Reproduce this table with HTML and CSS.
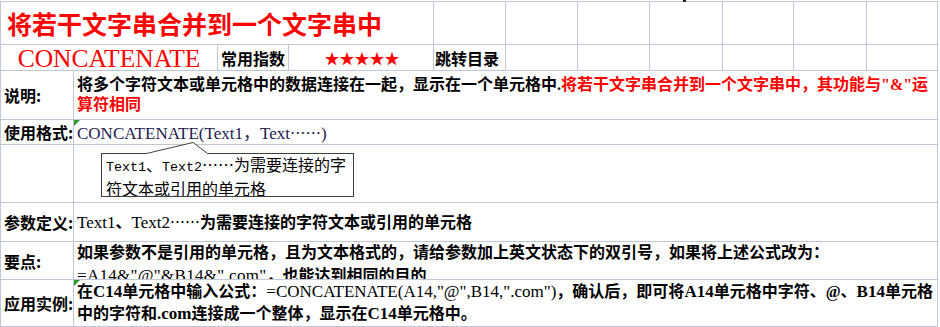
FILE: index.html
```html
<!DOCTYPE html>
<html lang="zh-CN">
<head>
<meta charset="utf-8">
<title>CONCATENATE</title>
<link rel="stylesheet" href="styles.css">
</head>
<body>
<div class="sheet">
  <div class="c title s6">将若干文字串合并到一个文字串中</div>
  <div class="c"></div><div class="c"></div><div class="c"></div><div class="c"></div><div class="c"></div><div class="c"></div><div class="c"></div>

  <div class="c fname s3">CONCATENATE</div>
  <div class="c hd">常用指数</div>
  <div class="c stars s2">★★★★★</div>
  <div class="c hd jump">跳转目录</div>
  <div class="c"></div><div class="c"></div><div class="c"></div><div class="c"></div><div class="c"></div><div class="c"></div>

  <div class="c lbl">说明:</div>
  <div class="c txt s12 mid lh20"><div><b>将多个字符文本或单元格中的数据连接在一起，显示在一个单元格中.</b><b class="red">将若干文字串合并到一个文字串中，其功能与"&amp;"运<br>算符相同</b></div></div>

  <div class="c lbl">使用格式:</div>
  <div class="c txt s12 mid flag"><span class="fmt">CONCATENATE(Text1，Text<span class="ell">……</span>)</span></div>

  <div class="c lbl"></div>
  <div class="c txt s12"></div>

  <div class="c lbl">参数定义:</div>
  <div class="c txt s12 mid"><div><span class="lat">Text1</span><b>、</b><span class="lat">Text2</span><span class="ell">……</span><b>为需要连接的字符文本或引用的单元格</b></div></div>

  <div class="c lbl">要点:</div>
  <div class="c txt s12 top lh22"><div><b>如果参数不是引用的单元格，且为文本格式的，请给参数加上英文状态下的双引号，如果将上述公式改为：</b><br><span class="lat sp">=A14&amp;"@"&amp;B14&amp;".com"</span><b>，也能达到相同的目的</b></div></div>

  <div class="c lbl">应用实例:</div>
  <div class="c txt s12 mid lh22 flag"><div><b>在<span class="lat">C14</span>单元格中输入公式：</b><span class="lat">=CONCATENATE(A14,"@",B14,".com")</span><b>，确认后，即可将<span class="lat">A14</span>单元格中字符、@、<span class="lat">B14</span>单元格<br>中的字符和<span class="lat">.com</span>连接成一个整体，显示在<span class="lat">C14</span>单元格中。</b></div></div>

  <div class="callout"><span class="mono">Text1</span>、<span class="mono">Text2</span>……为需要连接的字<br>符文本或引用的单元格</div>
  <svg class="pointer" width="75" height="18" viewBox="0 0 75 18">
    <polygon points="6.5,13.5 53,2.5 67.5,13.5 67.5,14.6 6.5,14.6" fill="#ffffff"/>
    <polyline points="6.5,13.5 53,2.5 67.5,13.5" fill="none" stroke="#404040" stroke-width="1"/>
  </svg>
  <div class="mark"></div>
</div>
</body>
</html>
```

FILE: styles.css
```css
html, body {
  margin: 0;
  padding: 0;
  background: #ffffff;
}

.sheet {
  position: relative;
  margin-top: 1px;
  width: 938px;
  box-sizing: border-box;
  display: grid;
  grid-template-columns: 73px 72px 72px 71px 74px 71px 72px 72px 72px 73px 71px 73px 71px;
  grid-template-rows: 43px 26px 49px 25px 58px 39px 38px 47px;
  border-top: 1px solid #c2c7d6;
  border-left: 1px solid #c2c7d6;
  font-family: "Liberation Serif", "Noto Sans CJK SC", serif;
  font-size: 16px;
  color: #000000;
}

.c {
  box-sizing: border-box;
  border-right: 1px solid #c2c7d6;
  border-bottom: 1px solid #c2c7d6;
  overflow: hidden;
  white-space: nowrap;
  display: flex;
  align-items: center;
  position: relative;
}

.s2 { grid-column: span 2; }
.s3 { grid-column: span 3; }
.s6 { grid-column: span 6; }
.s12 { grid-column: span 12; }

.title {
  color: #ff0000;
  font-weight: 700;
  font-size: 25px;
  line-height: 30px;
  padding-left: 6px;
  font-family: "Noto Sans CJK SC", sans-serif;
}

.fname {
  justify-content: center;
  color: #ff0000;
  font-family: "Liberation Serif", serif;
  font-size: 25.5px;
  line-height: 23px;
  padding-top: 1px;
}

.hd {
  font-family: "Noto Sans CJK SC", sans-serif;
  font-weight: 700;
  font-size: 16px;
  line-height: 20px;
  padding-left: 3px;
}

.jump {
  padding-left: 1px;
}

.stars {
  justify-content: center;
  color: #ff0000;
  font-family: "Noto Sans CJK SC", sans-serif;
  font-size: 15px;
  line-height: 20px;
  padding-left: 2px;
}

.lbl {
  font-family: "Noto Sans CJK SC", sans-serif;
  font-weight: 700;
  font-size: 16px;
  line-height: 20px;
  padding-left: 3px;
}

.txt {
  padding-left: 3px;
  line-height: 22px;
}

.txt b {
  font-weight: 700;
}

.lh20 { line-height: 20.5px; }
.lh22 { line-height: 22.5px; }

.top {
  align-items: flex-start;
}

.red {
  color: #ff0000;
}

.lat {
  font-family: "Liberation Serif", serif;
  font-size: 17px;
}

.ell {
  font-family: "Noto Sans CJK SC", sans-serif;
  font-size: 15px;
}

.sp {
  letter-spacing: 0.3px;
}

.fmt {
  font-family: "Liberation Serif", serif;
  font-size: 17px;
  color: #202050;
  padding-top: 1px;
}

.fmt .ell {
  font-size: 15.5px;
}

.flag::before {
  content: "";
  position: absolute;
  left: 0;
  top: 0;
  width: 0;
  height: 0;
  border-top: 6px solid #2c9a2c;
  border-right: 6px solid transparent;
}

.callout {
  position: absolute;
  left: 100px;
  top: 151px;
  width: 253px;
  height: 44px;
  box-sizing: border-box;
  border: 1px solid #404040;
  background: #ffffff;
  padding: 0 0 0 4px;
  font-family: "Noto Sans CJK SC", sans-serif;
  font-size: 16px;
  line-height: 21px;
  color: #000000;
  white-space: nowrap;
  overflow: hidden;
}

.mono {
  font-family: "Liberation Mono", monospace;
  font-size: 13.33px;
}

.pointer {
  position: absolute;
  left: 139px;
  top: 138px;
  display: block;
}

.mark {
  position: absolute;
  left: 682px;
  top: -2px;
  width: 3px;
  height: 2px;
  background: #202020;
}
```
